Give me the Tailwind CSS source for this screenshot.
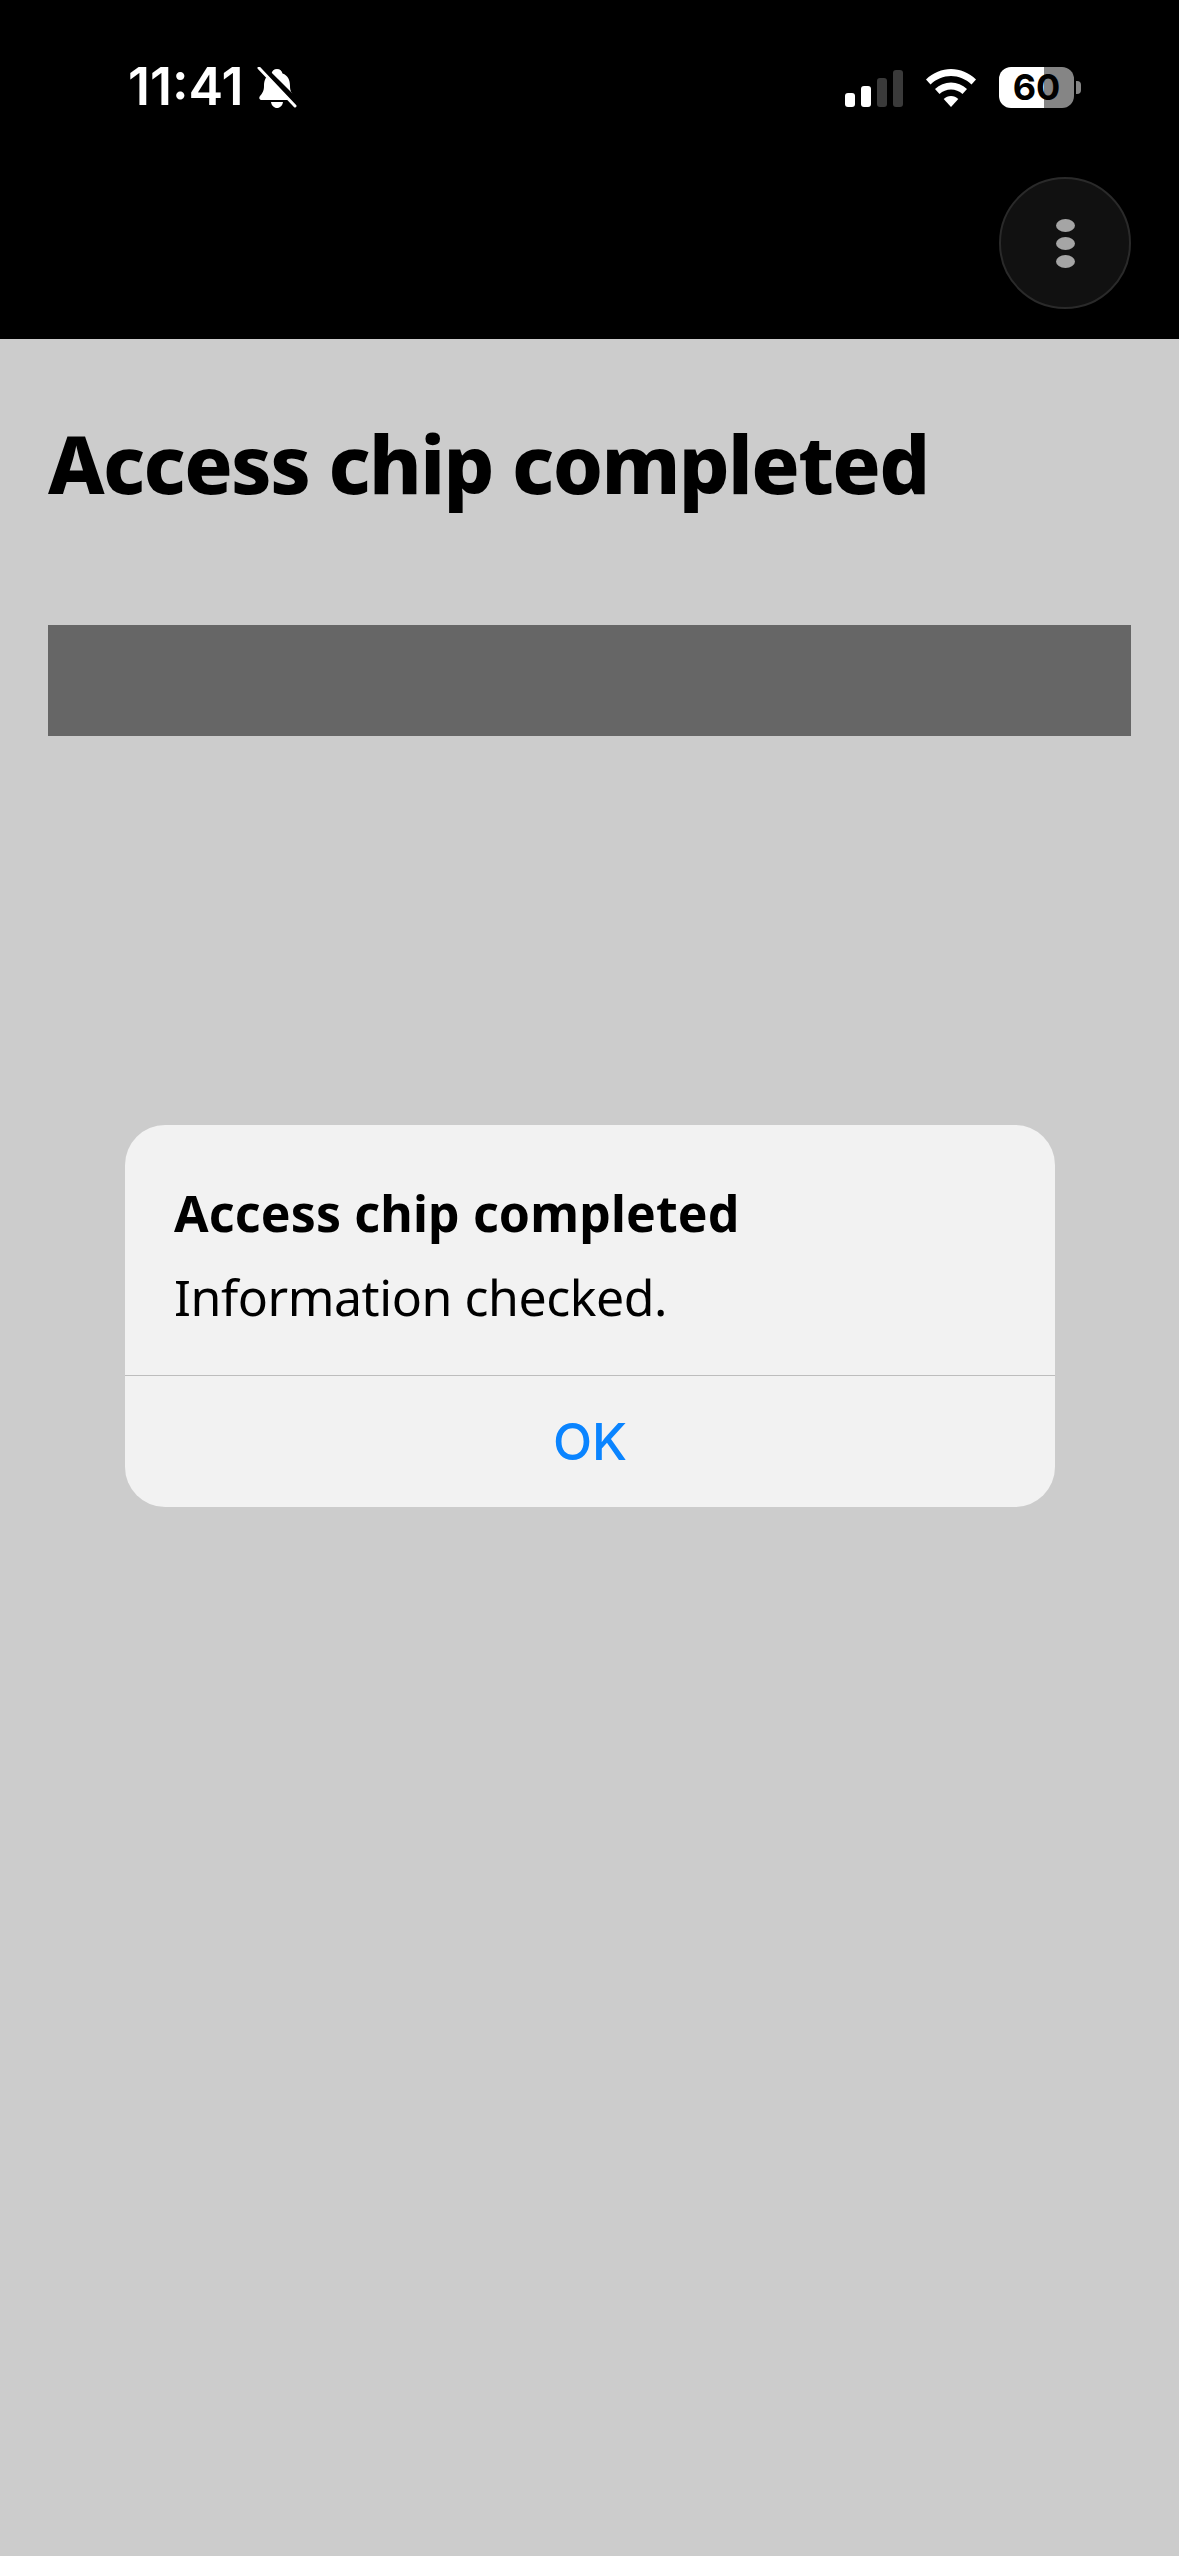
<!DOCTYPE html>
<html lang="en">
<head>
<meta charset="utf-8">
<title>Access chip completed</title>
<script src="https://cdn.jsdelivr.net/npm/@tailwindcss/browser@4"></script>
</head>
<body class="bg-[#cccccc]">
<div class="relative w-[1179px] h-[2556px] overflow-hidden bg-[#cccccc] font-['Noto_Sans',sans-serif] text-black">
  <header class="h-[339px] bg-black flex flex-col">
    <div class="h-[177px] flex items-start justify-between pl-[128px] pr-[98px] pt-[60px]">
      <div class="flex items-center gap-[13px] h-[54px]">
        <span class="font-['Inter',sans-serif] font-semibold text-[52px] leading-[54px] text-white">11:41</span>
        <svg class="w-[40px] h-[41px]" viewBox="0 0 40 41" fill="none">
          <path d="M20 2c3 0 5 2 5.500 4.500C31 8.500 33 13 33 19c0 5 1.500 7 4 10 1.500 2 .5 4-2 4H5c-2.500 0-3.500-2-2-4 2.500-3 4-5 4-10 0-6 2-10.500 7.500-12.500C15 4 17 2 20 2z" fill="#fff"/>
          <path d="M14 35h12c-.5 3.500-3 6-6 6s-5.500-2.500-6-6z" fill="#fff"/>
          <path d="M1 -3 43 39" stroke="#000" stroke-width="7"/>
          <path d="M2 1 38 39" stroke="#fff" stroke-width="3" stroke-linecap="round"/>
        </svg>
      </div>
      <div class="flex items-center h-[54px]">
        <div class="flex items-end gap-[6px] h-[38px] mt-[2px]">
          <span class="w-[10px] h-[14px] rounded-[3px] bg-white"></span>
          <span class="w-[10px] h-[21px] rounded-[3px] bg-white"></span>
          <span class="w-[10px] h-[29px] rounded-[3px] bg-[#3a3a3a]"></span>
          <span class="w-[10px] h-[37px] rounded-[3px] bg-[#3a3a3a]"></span>
        </div>
        <svg class="w-[50px] h-[38px] ml-[23px] mt-[1px]" viewBox="0 0 50 38" fill="none">
          <path d="M25 0C34 0 43 3.800 50 10.500L45.500 15.500C39.800 10 32.500 7 25 7S10.200 10 4.500 15.500L0 10.500C7 3.800 16 0 25 0z" fill="#fff"/>
          <path d="M25 13.500c6 0 11.500 2.300 16 6.500l-4.500 5c-3.200-3-7.200-4.600-11.500-4.600S16.700 22 13.500 25L9 20c4.500-4.200 10-6.500 16-6.500z" fill="#fff"/>
          <path d="M25 27c2.800 0 5.300 1 7.300 3L25 38l-7.300-8c2-2 4.500-3 7.300-3z" fill="#fff"/>
        </svg>
        <div class="flex items-center ml-[23px]">
          <div class="w-[75px] h-[41px] rounded-[12px] bg-[linear-gradient(to_right,#ffffff_0,#ffffff_45px,#858585_45px,#858585_100%)] flex items-center justify-center">
            <span class="font-['Inter',sans-serif] font-bold text-[36px] leading-[40px] text-black">60</span>
          </div>
          <span class="w-[5px] h-[13px] ml-[2px] rounded-r-[4px] bg-[#858585]"></span>
        </div>
      </div>
    </div>
    <div class="flex justify-end pr-[48px]">
      <button class="w-[132px] h-[132px] rounded-full bg-[#111111] border-2 border-[#2a2a2a] flex flex-col items-center justify-center gap-[5px]">
        <span class="w-[19px] h-[13px] rounded-[50%] bg-[#a5a5a5]"></span>
        <span class="w-[19px] h-[13px] rounded-[50%] bg-[#a5a5a5]"></span>
        <span class="w-[19px] h-[13px] rounded-[50%] bg-[#a5a5a5]"></span>
      </button>
    </div>
  </header>
  <main class="px-[48px]">
    <h1 class="mt-[69px] h-[110px] font-extrabold text-[80px] leading-[110px] tracking-[-1.6px]">Access chip completed</h1>
    <div class="mt-[107px] h-[111px] w-[1083px] bg-[#666666]"></div>
  </main>
  <div class="absolute left-[125px] top-[1125px] w-[930px] h-[382px] rounded-[40px] bg-[#f2f2f2] flex flex-col">
    <div class="h-[251px] px-[49px] pt-[53px] border-b border-b-[#bdbdbd]">
      <h2 class="font-bold text-[50px] leading-[70px] tracking-[0.15px]">Access chip completed</h2>
      <p class="mt-[14px] text-[50px] leading-[70px] tracking-[-0.45px]">Information checked.</p>
    </div>
    <div class="flex-1 flex items-center justify-center pt-[2px] font-['Inter',sans-serif] font-medium text-[51px] text-[#0a84ff]">OK</div>
  </div>
</div>
</body>
</html>
